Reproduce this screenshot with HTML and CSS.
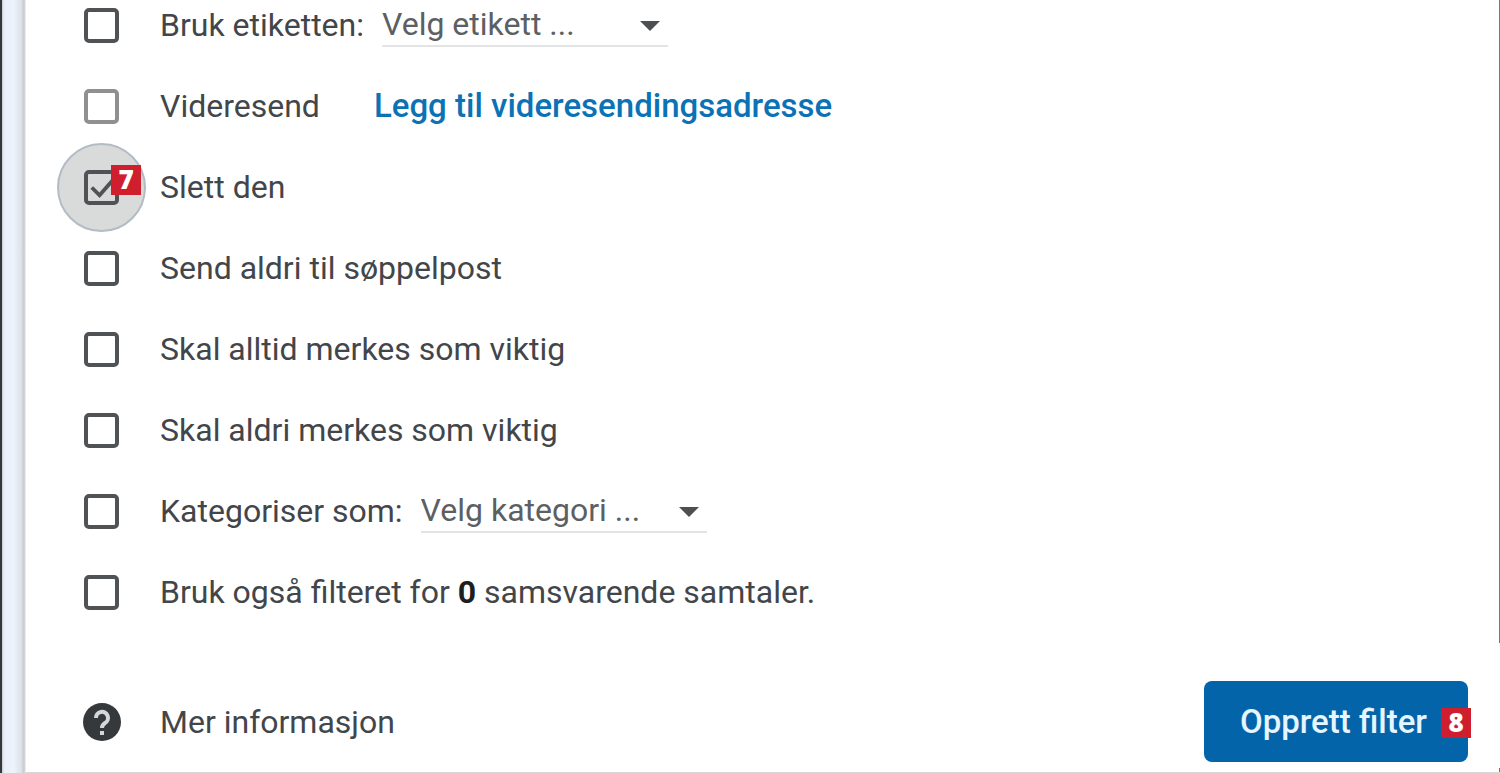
FILE: index.html
```html
<!DOCTYPE html>
<html lang="no">
  <head>
    <meta charset="UTF-8" />
    <meta name="viewport" content="width=device-width, initial-scale=1.0" />
    <title>Opprett filter</title>
    <!-- Stylesheet -->
    <link rel="stylesheet" href="styles.css" />
  </head>
  <body>
    <div class="edge"></div>
    <form class="panel">
      <div class="options">
        <div class="row">
          <span class="box"><input type="checkbox" id="use-label" /></span>
          <label for="use-label">Bruk etiketten:</label>
          <span class="picker">
            <select aria-label="Etikett">
              <option>Velg etikett ...</option>
            </select>
            <svg class="arrow" viewBox="0 0 20 10"><path d="M0 0h20L10 10z" /></svg>
          </span>
        </div>
        <div class="row">
          <span class="box"><input type="checkbox" id="forward" class="muted" /></span>
          <label for="forward">Videresend</label>
          <a class="forward-link" href="#">Legg til videresendingsadresse</a>
        </div>
        <div class="row">
          <span class="box focused">
            <input type="checkbox" id="delete" checked />
            <svg class="tick" viewBox="0 0 36 36"><path d="M8 18l8 8L30 10" /></svg>
            <span class="step step-check">7</span>
          </span>
          <label for="delete">Slett den</label>
        </div>
        <div class="row">
          <span class="box"><input type="checkbox" id="never-spam" /></span>
          <label for="never-spam">Send aldri til søppelpost</label>
        </div>
        <div class="row">
          <span class="box"><input type="checkbox" id="always-important" /></span>
          <label for="always-important">Skal alltid merkes som viktig</label>
        </div>
        <div class="row">
          <span class="box"><input type="checkbox" id="never-important" /></span>
          <label for="never-important">Skal aldri merkes som viktig</label>
        </div>
        <div class="row">
          <span class="box"><input type="checkbox" id="categorize" /></span>
          <label for="categorize">Kategoriser som:</label>
          <span class="picker">
            <select aria-label="Kategori">
              <option>Velg kategori ...</option>
            </select>
            <svg class="arrow" viewBox="0 0 20 10"><path d="M0 0h20L10 10z" /></svg>
          </span>
        </div>
        <div class="row">
          <span class="box"><input type="checkbox" id="apply-also" /></span>
          <label for="apply-also">Bruk også filteret for <b>0</b> samsvarende samtaler.</label>
        </div>
      </div>
      <div class="footer">
        <a class="more" href="#">
          <svg class="help" viewBox="0 0 38 38">
            <circle cx="19" cy="19" r="19" />
            <path d="M13 15a6 6 0 1 1 9 5q-3 2-3 5" />
            <path d="M19 28v4" />
          </svg>
          Mer informasjon
        </a>
        <div class="submit">
          <button type="button">Opprett filter</button>
          <span class="step step-submit">8</span>
        </div>
      </div>
    </form>
  </body>
</html>
```
FILE: styles.css
```css
* {
  padding: 0;
  margin: 0;
  box-sizing: border-box;
  font-family: Roboto, sans-serif;
}
body {
  display: flex;
  min-height: 100vh;
  background-color: #ffffff;
  color: #42464a;
  font-size: 32px;
  line-height: 40px;
}
.edge {
  width: 26px;
  flex: none;
  border-left: 2px solid #35373c;
  background: linear-gradient(to right, #c3c8d0 0, #e9eef8 2px, #edf2fb 12px, #dde3e8 19px, #c4cacd 22px, #f4f5f5 24px);
}
.panel {
  flex: 1;
  display: flex;
  flex-direction: column;
  justify-content: space-between;
  padding: 0 32px 10px 58px;
  border-bottom: 1px solid #d8d8d8;
  /* the side line is broken beside the footer */
  background:
    linear-gradient(#777777, #777777) right top / 1px calc(100% - 129px) no-repeat,
    linear-gradient(#777777, #777777) right bottom / 1px 4px no-repeat;
}
.options {
  display: flex;
  flex-direction: column;
  gap: 31px;
}
.row {
  display: flex;
  align-items: center;
  height: 50px;
}
.box {
  position: relative;
  display: flex;
  width: 35px;
  height: 35px;
  margin-right: 41px;
}
input {
  appearance: none;
  position: relative;
  width: 35px;
  height: 35px;
  border: 4px solid #505356;
  border-radius: 5px;
}
input.muted {
  border-color: #8e9092;
}
.focused::before {
  content: "";
  position: absolute;
  inset: -27px;
  border: 2px solid #b3bcc4;
  border-radius: 50%;
  background-color: #d9dada;
}
.tick {
  position: absolute;
  inset: 0;
  fill: none;
  stroke: #505356;
  stroke-width: 4;
  pointer-events: none;
}
.step {
  position: absolute;
  width: 30px;
  height: 30px;
  background-color: #cf1f2e;
  color: #ffffff;
  font-family: "Open Sans", sans-serif;
  font-size: 26px;
  font-weight: 800;
  line-height: 28px;
  text-align: center;
}
.step-check {
  top: -5px;
  right: -22px;
}
.step-submit {
  top: 27px;
  right: -3px;
}
.picker {
  position: relative;
  margin-left: 18px;
}
select {
  appearance: none;
  display: block;
  width: 286px;
  height: 44px;
  border: none;
  border-bottom: 2px solid #e2e4e6;
  background: none;
  color: #5c6063;
  font-size: 32px;
}
.arrow {
  position: absolute;
  top: 18px;
  right: 8px;
  width: 20px;
  height: 10px;
  fill: #4c5053;
  pointer-events: none;
}
.forward-link {
  margin-left: 54px;
  color: #0b72b5;
  font-size: 33px;
  font-weight: 500;
  text-decoration: none;
}
b {
  color: #1c1e20;
  font-weight: 700;
}
.footer {
  display: flex;
  align-items: center;
  justify-content: space-between;
}
.more {
  display: flex;
  align-items: center;
  gap: 40px;
  color: #42464a;
  text-decoration: none;
}
.help {
  width: 38px;
  height: 38px;
  margin: 0 -1px;
  fill: #36393b;
}
.help path {
  fill: none;
  stroke: #d5d8d9;
  stroke-width: 4;
}
.submit {
  position: relative;
}
button {
  display: block;
  height: 81px;
  padding: 0 41px 0 36px;
  border: none;
  border-radius: 8px;
  background-color: #0364aa;
  color: #e6f5ff;
  font-size: 33px;
  font-weight: 500;
}
```
